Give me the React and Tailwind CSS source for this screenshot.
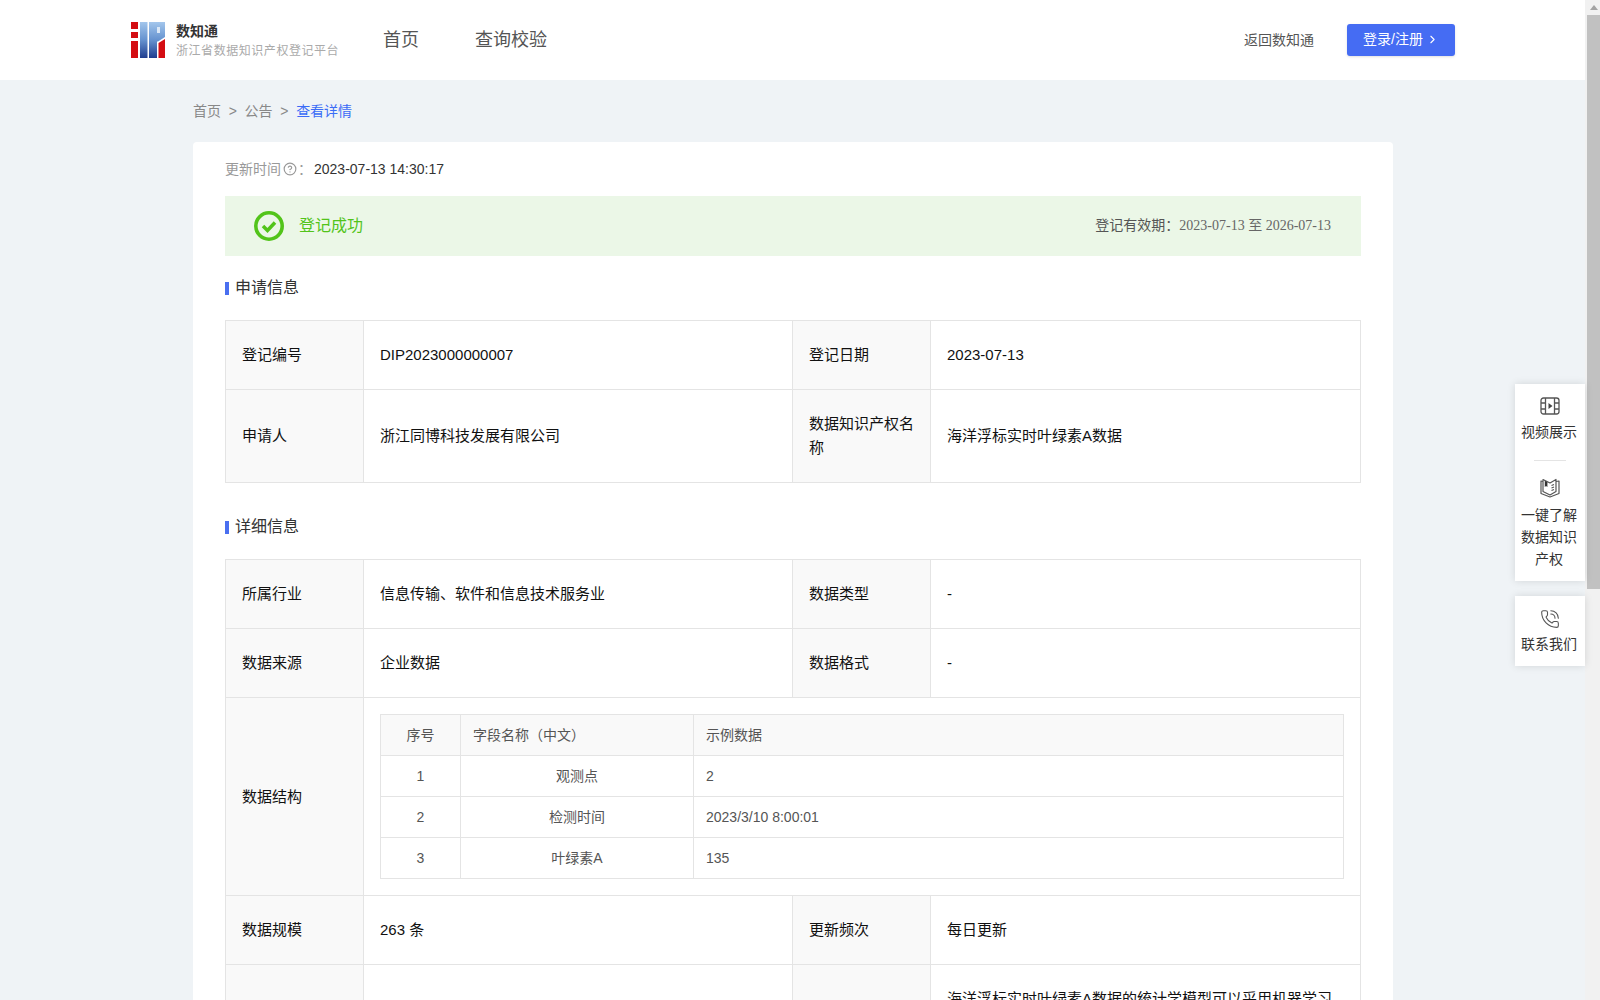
import { ChevronRight, CircleHelp, PhoneCall } from 'lucide-react';

const Logo = () => (
  <svg width="34" height="36" viewBox="0 0 34 36" className="shrink-0">
    <defs>
      <linearGradient id="logoBlue" x1="0" y1="0" x2="0" y2="1">
        <stop offset="0" stopColor="#a3c6ec" />
        <stop offset="0.5" stopColor="#6592cf" />
        <stop offset="1" stopColor="#1f3d8f" />
      </linearGradient>
    </defs>
    <path d="M0 0h7v7H0zM0 10h7v6H0zM0 19h7v17H0z" fill="#d40d12" />
    <rect x="9" y="0" width="7.500" height="36" fill="url(#logoBlue)" />
    <path d="M18 0h16v15l-7 4.500h-1V36h-8z" fill="url(#logoBlue)" />
    <rect x="26" y="5" width="3" height="6" fill="#dbe8f7" />
    <path d="M27.500 21l6.500-4v19h-6.500z" fill="#d40d12" />
  </svg>
);

const FilmIcon = () => (
  <svg width="20" height="18" viewBox="0 0 20 18" fill="none" stroke="#555" strokeWidth="1.3">
    <rect x="1" y="1" width="18" height="16" rx="2.5" />
    <path d="M5.500 1v16M14.500 1v16M1 6h4.500M1 12h4.500M14.500 6H19M14.500 12H19" />
    <path d="M8.500 6v6l4-3z" fill="#444" stroke="none" />
  </svg>
);

const BookIcon = () => (
  <svg width="20" height="20" viewBox="0 0 20 20" fill="none" stroke="#555" strokeWidth="1.2" strokeLinejoin="round">
    <path d="M3 3.500L1 3v12.500L10 19l9-3.500V3l-3 .5" />
    <path d="M3 1.500L10 5l6-3.500v12L10 17l-7-3.500z" />
    <path d="M4.800 2.800l2.600 1.200v5L6 8 4.800 9z" fill="#333" stroke="none" />
    <path d="M11.500 7.500l2.500-1M11.500 10l2.500-1M11.500 12.500l2.500-1" />
  </svg>
);

const SectionTitle = ({ children, className }) => (
  <div className={`flex items-center gap-[6px] text-[16px] leading-[24px] text-[#333] ${className}`}>
    <span className="mt-[1px] h-[13px] w-[4px] bg-[#4a6ff0]" />
    {children}
  </div>
);

const Label = ({ children }) => (
  <td className="border border-[#e4e4e4] bg-[#f9f9f9] px-4 py-[22px] align-middle text-[15px] leading-[24px] text-[#111]">
    {children}
  </td>
);

const Value = ({ children, colSpan }) => (
  <td colSpan={colSpan} className="border border-[#e4e4e4] px-4 py-[22px] align-middle text-[15px] leading-[24px] text-[#111]">
    {children}
  </td>
);

const Colgroup = () => (
  <colgroup>
    <col className="w-[138px]" />
    <col className="w-[429px]" />
    <col className="w-[138px]" />
    <col />
  </colgroup>
);

const fields = [
  ['1', '观测点', '2'],
  ['2', '检测时间', '2023/3/10 8:00:01'],
  ['3', '叶绿素A', '135'],
];

const FieldTable = () => (
  <table className="w-[964px] table-fixed border-collapse text-[14px] leading-[24px] text-[#555]">
    <colgroup>
      <col className="w-[80px]" />
      <col className="w-[233px]" />
      <col />
    </colgroup>
    <thead>
      <tr className="bg-[#f9f9f9]">
        <th className="border border-[#e4e4e4] py-2 text-center font-normal">序号</th>
        <th className="border border-[#e4e4e4] px-3 py-2 text-left font-normal">字段名称（中文）</th>
        <th className="border border-[#e4e4e4] px-3 py-2 text-left font-normal">示例数据</th>
      </tr>
    </thead>
    <tbody>
      {fields.map((row) => (
        <tr key={row[0]}>
          <td className="border border-[#e4e4e4] py-2 text-center">{row[0]}</td>
          <td className="border border-[#e4e4e4] px-3 py-2 text-center">{row[1]}</td>
          <td className="border border-[#e4e4e4] px-3 py-2">{row[2]}</td>
        </tr>
      ))}
    </tbody>
  </table>
);

const App = () => (
  <div className="relative flex h-screen overflow-hidden bg-[#eff3f6] font-['Liberation_Sans','Noto_Sans_CJK_SC',sans-serif]">
    <div className="w-[1585px] shrink-0">
      <header className="flex h-20 items-center bg-white pl-[131px] pr-[130px]">
        <Logo />
        <div className="ml-[11px] w-[207px]">
          <div className="text-[14px] font-bold leading-[20px] text-[#333]">数知通</div>
          <div className="mt-[1px] text-[12px] leading-[18px] tracking-[0.55px] text-[#aaa]">浙江省数据知识产权登记平台</div>
        </div>
        <nav className="flex gap-[56px] text-[18px] text-[#555]">
          <span>首页</span>
          <span>查询校验</span>
        </nav>
        <span className="ml-auto text-[14px] text-[#555]">返回数知通</span>
        <button className="ml-[33px] flex h-8 w-[108px] items-center justify-center gap-[3px] rounded-[3px] bg-[#456cf3] pb-[1px] text-[14px] text-white shadow-sm">
          登录/注册
          <ChevronRight size={13} strokeWidth={2} />
        </button>
      </header>

      <main className="ml-[193px] w-[1200px]">
        <div className="flex h-[62px] items-center gap-[7.7px] text-[14px] text-[#888]">
          <span>首页</span>
          <span>&gt;</span>
          <span>公告</span>
          <span>&gt;</span>
          <span className="text-[#3b6cf6]">查看详情</span>
        </div>

        <div className="rounded-t-[4px] bg-white px-8">
          <div className="flex h-[54px] items-center text-[14px]">
            <span className="text-[#999]">更新时间</span>
            <CircleHelp size={14} strokeWidth={2} className="ml-[2px] text-[#999]" />
            <span className="ml-[1px] text-[#999]">：</span>
            <span className="ml-[2px] text-[#333]">2023-07-13 14:30:17</span>
          </div>

          <div className="flex h-[60px] items-center justify-between bg-[#ebf7e7] pl-[29px] pr-[30px]">
            <div className="flex items-center gap-[15px] text-[16px] text-[#52c41a]">
              <svg width="30" height="30" viewBox="0 0 30 30" fill="none" stroke="#52c41a">
                <circle cx="15" cy="15" r="13.200" strokeWidth="3.600" />
                <path d="M9 15l4.500 4.500L21 11.500" strokeWidth="3.500" />
              </svg>
              登记成功
            </div>
            <div className="-mt-[2px] text-[14px] text-[#555]">
              登记有效期：
              <span className="font-['Liberation_Serif','Noto_Sans_CJK_SC',serif] text-[#666]">2023-07-13 至 2026-07-13</span>
            </div>
          </div>

          <SectionTitle className="h-[64px]">申请信息</SectionTitle>
          <table className="w-[1136px] table-fixed border-collapse">
            <Colgroup />
            <tbody>
              <tr>
                <Label>登记编号</Label>
                <Value>DIP2023000000007</Value>
                <Label>登记日期</Label>
                <Value>2023-07-13</Value>
              </tr>
              <tr>
                <Label>申请人</Label>
                <Value>浙江同博科技发展有限公司</Value>
                <Label>数据知识产权名称</Label>
                <Value>海洋浮标实时叶绿素A数据</Value>
              </tr>
            </tbody>
          </table>

          <SectionTitle className="mt-[12px] h-[64px]">详细信息</SectionTitle>
          <table className="w-[1136px] table-fixed border-collapse">
            <Colgroup />
            <tbody>
              <tr>
                <Label>所属行业</Label>
                <Value>信息传输、软件和信息技术服务业</Value>
                <Label>数据类型</Label>
                <Value>-</Value>
              </tr>
              <tr>
                <Label>数据来源</Label>
                <Value>企业数据</Value>
                <Label>数据格式</Label>
                <Value>-</Value>
              </tr>
              <tr>
                <Label>数据结构</Label>
                <td colSpan={3} className="border border-[#e4e4e4] p-4">
                  <FieldTable />
                </td>
              </tr>
              <tr>
                <Label>数据规模</Label>
                <Value>263 条</Value>
                <Label>更新频次</Label>
                <Value>每日更新</Value>
              </tr>
              <tr>
                <Label />
                <Value />
                <Label />
                <Value>海洋浮标实时叶绿素A数据的统计学模型可以采用机器学习</Value>
              </tr>
            </tbody>
          </table>
        </div>
      </main>
    </div>

    {/* page scrollbar */}
    <div className="flex w-[15px] shrink-0 flex-col bg-[#f1f1f1]">
      <div className="flex h-[15px] items-center justify-center pl-[2px]">
        <span className="h-0 w-0 border-x-[4px] border-b-[5px] border-x-transparent border-b-[#a3a3a3]" />
      </div>
      <div className="ml-[2px] h-[574px] bg-[#c1c1c1]" />
    </div>

    {/* floating side widgets */}
    <div className="absolute right-[15px] top-[384px] flex w-[70px] flex-col gap-[15px] text-center text-[14px] leading-[22px] text-[#333]">
      <div className="flex h-[197px] flex-col items-center bg-white pt-[13px] shadow-[0_0_8px_rgba(0,0,0,0.12)]">
        <FilmIcon />
        <div className="mr-[2px] mt-[6px]">视频展示</div>
        <div className="mt-[17px] h-px w-8 bg-[#e4e4e4]" />
        <div className="mt-[17px]"><BookIcon /></div>
        <div className="mr-[2px] mt-[6px]">一键了解<br />数据知识<br />产权</div>
      </div>
      <div className="flex h-[70px] flex-col items-center bg-white pt-[13px] shadow-[0_0_8px_rgba(0,0,0,0.12)]">
        <PhoneCall size={20} strokeWidth={1.3} className="text-[#555]" />
        <div className="mr-[2px] mt-[4px]">联系我们</div>
      </div>
    </div>
  </div>
);

export default App;
